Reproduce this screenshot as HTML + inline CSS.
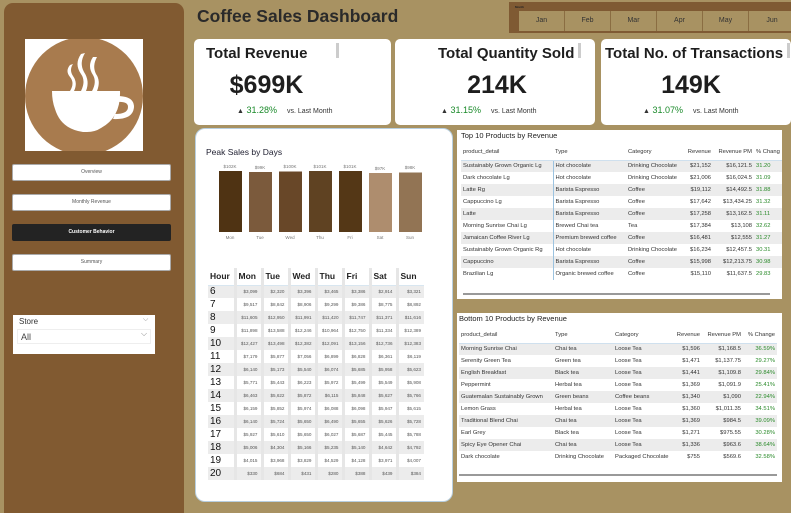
<!DOCTYPE html>
<html><head><meta charset="utf-8"><style>
*{margin:0;padding:0;box-sizing:border-box}
body{width:791px;height:510px;background:#A89262;position:relative;overflow:hidden;font-family:"Liberation Sans",sans-serif;color:#222}
.a{position:absolute}
.side{left:4px;top:3px;width:180px;height:510px;background:#815A31;border-radius:9px 9px 0 0}
.btn{position:absolute;left:12px;width:159px;height:17px;background:#fff;border:1px solid #aaa;border-radius:2px;font-size:5px;color:#555;text-align:center;line-height:15px}
.card{background:#fff;border-radius:5px}
.ct{font-weight:bold;font-size:15px;color:#1e1e1e;white-space:nowrap}
.cv{font-weight:bold;font-size:25px;color:#1e1e1e;text-align:center}
.cd{font-size:9px;color:#1a8a2a;white-space:nowrap}
.cd span{color:#333;font-size:7px;margin-left:10px}
.tri{color:#1a7a1a}
table{border-collapse:collapse;table-layout:fixed}
.tt td{font-size:5.8px;height:12px;white-space:nowrap;overflow:hidden;padding:0 2px;color:#333}
.tt tr:nth-child(even) td{background:#ececec}
.r{text-align:right}
.g{color:#2a8a2a!important}
.hm td{height:13px;font-size:4.6px;color:#555;text-align:right;padding-right:3px;width:27px;border-left:3px solid #e6e6e6}
.hm td:first-child{font-size:10px;color:#111;text-align:left;border-left:none;width:27px;padding-left:2px}
.hm tr:nth-child(even) td{background:#ececec}
.hm th{font-size:8.5px;font-weight:bold;text-align:left;height:17px;padding-left:2px;border-left:3px solid #e6e6e6;border-bottom:1px solid #d8e6f0}
.hm th:first-child{border-left:none}
.m{width:46px;height:20px;background:#A89262;border-right:1px solid #8a6d42;font-size:7px;text-align:center;line-height:20px;color:#333}
</style></head><body>
<div class="a side"></div>
<div class="a" style="left:25px;top:39px;width:118px;height:112px;background:#fff;overflow:hidden">
<svg width="118" height="112" viewBox="0 0 118 112"><circle cx="59" cy="57" r="59" fill="#A87B4E"/>
<path d="M27 52 H95 Q96 78 76 89 Q70 93 62 93 H58 Q36 90 30 70 Q27 62 27 52Z" fill="#fff"/>
<path d="M92 57 Q109 57 109 68 Q108 81 88 80 L90 75 Q103 75 103 68 Q103 62 92 63Z" fill="#fff"/>
<path d="M45 26 Q40 32 45 38 Q50 44 45 52 L49 52 Q53 44 48 37 Q44 31 48 25Z" fill="#fff"/>
<path d="M56 15 Q49 25 56 35 Q61 42 56 52 L61 52 Q65 42 59 33 Q54 24 60 14Z" fill="#fff"/>
<path d="M68 18 Q62 27 68 36 Q72 43 67 52 L72 52 Q76 42 71 35 Q67 27 72 18Z" fill="#fff"/>
</svg></div>
<div class="btn" style="top:164px">Overview</div>
<div class="btn" style="top:194px">Monthly Revenue</div>
<div class="btn" style="top:224px;background:#232323;color:#fff;border-color:#232323;font-weight:bold">Customer Behavior</div>
<div class="btn" style="top:254px">Summary</div>
<div class="a" style="left:13px;top:315px;width:142px;height:39px;background:#fff">
<div class="a" style="left:6px;top:2px;font-size:8px;color:#333">Store</div>
<div class="a" style="left:130px;top:1px;font-size:7px;color:#888">⌵</div>
<div class="a" style="left:4px;top:14px;width:134px;height:15px;border:1px solid #eee;font-size:9px;color:#444;padding-left:3px;line-height:14px">All</div>
<div class="a" style="left:128px;top:14px;font-size:8px;color:#888">⌵</div>
</div>

<div class="a" style="left:197px;top:6px;font-size:17.5px;font-weight:bold;color:#2a2a2a">Coffee Sales Dashboard</div>
<div class="a" style="left:509px;top:2px;width:282px;height:31px;background:#7F5A33"></div>
<div class="a" style="left:515px;top:5px;font-size:3px;color:#222;font-weight:bold">Month</div>
<div class="a" style="left:519px;top:11px;display:flex">
<div class="m">Jan</div><div class="m">Feb</div><div class="m">Mar</div><div class="m">Apr</div><div class="m">May</div><div class="m" style="border:none">Jun</div>
</div>

<div class="a card" style="left:194px;top:39px;width:197px;height:86px">
<div class="a ct" style="left:12px;top:6px">Total Revenue</div>
<div class="a" style="left:142px;top:4px;width:3px;height:15px;background:#ccc"></div>
<div class="a cv" style="left:0;top:32px;width:145px">$699K</div>
<div class="a cd" style="left:33px;top:66px"><span class="tri">▲</span> 31.28%<span>vs. Last Month</span></div>
</div>
<div class="a card" style="left:395px;top:39px;width:200px;height:86px">
<div class="a ct" style="left:43px;top:6px">Total Quantity Sold</div>
<div class="a" style="left:183px;top:4px;width:3px;height:15px;background:#ccc"></div>
<div class="a cv" style="left:42px;top:32px;width:120px">214K</div>
<div class="a cd" style="left:36px;top:66px"><span class="tri">▲</span> 31.15%<span>vs. Last Month</span></div>
</div>
<div class="a card" style="left:601px;top:39px;width:190px;height:86px">
<div class="a ct" style="left:4px;top:6px">Total No. of Transactions</div>
<div class="a" style="left:186px;top:4px;width:3px;height:15px;background:#ccc"></div>
<div class="a cv" style="left:30px;top:32px;width:120px">149K</div>
<div class="a cd" style="left:32px;top:66px"><span class="tri">▲</span> 31.07%<span>vs. Last Month</span></div>
</div>

<div class="a" style="left:195px;top:128px;width:258px;height:374px;background:#fff;border-radius:10px;border:1px solid #b8cfe0">
<div class="a" style="left:10px;top:18px;font-size:8.5px;color:#223">Peak Sales by Days</div>
<svg class="a" style="left:15px;top:32px" width="220" height="80" viewBox="0 0 220 80" font-family="Liberation Sans" font-size="4.5" fill="#777" text-anchor="middle">
<rect x="8" y="10" width="23" height="61" fill="#4F3313"/><text x="19" y="7">$102K</text><text x="19" y="78">Mon</text>
<rect x="38" y="11" width="23" height="60" fill="#7B5A3C"/><text x="49" y="8">$99K</text><text x="49" y="78">Tue</text>
<rect x="68" y="10.5" width="23" height="60.5" fill="#684728"/><text x="79" y="7">$100K</text><text x="79" y="78">Wed</text>
<rect x="98" y="10" width="23" height="61" fill="#5F4222"/><text x="109" y="7">$101K</text><text x="109" y="78">Thu</text>
<rect x="128" y="10" width="23" height="61" fill="#543716"/><text x="139" y="7">$101K</text><text x="139" y="78">Fri</text>
<rect x="158" y="12" width="23" height="59" fill="#AE8D6E"/><text x="169" y="9">$97K</text><text x="169" y="78">Sat</text>
<rect x="188" y="11.5" width="23" height="59.5" fill="#927454"/><text x="199" y="8">$98K</text><text x="199" y="78">Sun</text>
</svg>
<table class="a hm" style="left:12px;top:139px">
<tr><th>Hour</th><th>Mon</th><th>Tue</th><th>Wed</th><th>Thu</th><th>Fri</th><th>Sat</th><th>Sun</th></tr>
<tr><td>6</td><td>$3,099</td><td>$2,320</td><td>$3,396</td><td>$3,465</td><td>$3,386</td><td>$2,914</td><td>$3,321</td></tr>
<tr><td>7</td><td>$9,517</td><td>$8,842</td><td>$8,906</td><td>$9,299</td><td>$9,386</td><td>$8,775</td><td>$8,892</td></tr>
<tr><td>8</td><td>$11,605</td><td>$12,950</td><td>$11,991</td><td>$11,420</td><td>$11,747</td><td>$11,371</td><td>$11,616</td></tr>
<tr><td>9</td><td>$11,898</td><td>$13,588</td><td>$12,246</td><td>$10,964</td><td>$12,750</td><td>$11,334</td><td>$12,389</td></tr>
<tr><td>10</td><td>$12,427</td><td>$13,498</td><td>$12,382</td><td>$12,091</td><td>$13,156</td><td>$12,736</td><td>$12,383</td></tr>
<tr><td>11</td><td>$7,179</td><td>$5,877</td><td>$7,056</td><td>$6,899</td><td>$6,828</td><td>$6,361</td><td>$6,119</td></tr>
<tr><td>12</td><td>$6,140</td><td>$5,173</td><td>$5,540</td><td>$6,074</td><td>$5,685</td><td>$5,958</td><td>$5,623</td></tr>
<tr><td>13</td><td>$5,771</td><td>$5,443</td><td>$6,223</td><td>$5,972</td><td>$5,499</td><td>$5,549</td><td>$5,908</td></tr>
<tr><td>14</td><td>$6,463</td><td>$5,622</td><td>$5,872</td><td>$6,115</td><td>$5,848</td><td>$5,627</td><td>$5,766</td></tr>
<tr><td>15</td><td>$6,159</td><td>$5,852</td><td>$5,974</td><td>$6,088</td><td>$6,098</td><td>$5,947</td><td>$5,615</td></tr>
<tr><td>16</td><td>$6,140</td><td>$5,724</td><td>$5,650</td><td>$6,490</td><td>$5,655</td><td>$5,626</td><td>$5,728</td></tr>
<tr><td>17</td><td>$5,927</td><td>$5,610</td><td>$5,650</td><td>$6,027</td><td>$5,687</td><td>$5,445</td><td>$5,788</td></tr>
<tr><td>18</td><td>$5,006</td><td>$4,304</td><td>$5,166</td><td>$5,235</td><td>$5,140</td><td>$4,642</td><td>$4,792</td></tr>
<tr><td>19</td><td>$4,015</td><td>$3,968</td><td>$3,829</td><td>$4,529</td><td>$4,128</td><td>$3,971</td><td>$4,007</td></tr>
<tr><td>20</td><td>$330</td><td>$684</td><td>$431</td><td>$280</td><td>$388</td><td>$439</td><td>$384</td></tr>
</table>
</div>

<div class="a" style="left:457px;top:130px;width:325px;height:169px;background:#fff;overflow:hidden">
<div class="a" style="left:4px;top:1px;font-size:7.5px;color:#222">Top 10 Products by Revenue</div>
<table class="a tt" style="left:4px;top:14px;width:330px">
<colgroup><col style="width:92px"><col style="width:73px"><col style="width:57px"><col style="width:30px"><col style="width:41px"><col style="width:37px"></colgroup>
<tr style="height:16px"><td style="background:#fff;border-bottom:1px solid #cfe0ee">product_detail</td><td style="border-bottom:1px solid #cfe0ee">Type</td><td style="border-bottom:1px solid #cfe0ee">Category</td><td class="r" style="border-bottom:1px solid #cfe0ee">Revenue</td><td class="r" style="border-bottom:1px solid #cfe0ee">Revenue PM</td><td style="border-bottom:1px solid #cfe0ee">% Chang</td></tr>
<tr><td style="border-right:1px solid #9cc3e0">Sustainably Grown Organic Lg</td><td>Hot chocolate</td><td>Drinking Chocolate</td><td class="r">$21,152</td><td class="r">$16,121.5</td><td class="g">31.20</td></tr>
<tr><td style="border-right:1px solid #9cc3e0">Dark chocolate Lg</td><td>Hot chocolate</td><td>Drinking Chocolate</td><td class="r">$21,006</td><td class="r">$16,024.5</td><td class="g">31.09</td></tr>
<tr><td style="border-right:1px solid #9cc3e0">Latte Rg</td><td>Barista Espresso</td><td>Coffee</td><td class="r">$19,112</td><td class="r">$14,492.5</td><td class="g">31.88</td></tr>
<tr><td style="border-right:1px solid #9cc3e0">Cappuccino Lg</td><td>Barista Espresso</td><td>Coffee</td><td class="r">$17,642</td><td class="r">$13,434.25</td><td class="g">31.32</td></tr>
<tr><td style="border-right:1px solid #9cc3e0">Latte</td><td>Barista Espresso</td><td>Coffee</td><td class="r">$17,258</td><td class="r">$13,162.5</td><td class="g">31.11</td></tr>
<tr><td style="border-right:1px solid #9cc3e0">Morning Sunrise Chai Lg</td><td>Brewed Chai tea</td><td>Tea</td><td class="r">$17,384</td><td class="r">$13,108</td><td class="g">32.62</td></tr>
<tr><td style="border-right:1px solid #9cc3e0">Jamaican Coffee River Lg</td><td>Premium brewed coffee</td><td>Coffee</td><td class="r">$16,481</td><td class="r">$12,555</td><td class="g">31.27</td></tr>
<tr><td style="border-right:1px solid #9cc3e0">Sustainably Grown Organic Rg</td><td>Hot chocolate</td><td>Drinking Chocolate</td><td class="r">$16,234</td><td class="r">$12,457.5</td><td class="g">30.31</td></tr>
<tr><td style="border-right:1px solid #9cc3e0">Cappuccino</td><td>Barista Espresso</td><td>Coffee</td><td class="r">$15,998</td><td class="r">$12,213.75</td><td class="g">30.98</td></tr>
<tr><td style="border-right:1px solid #9cc3e0">Brazilian Lg</td><td>Organic brewed coffee</td><td>Coffee</td><td class="r">$15,110</td><td class="r">$11,637.5</td><td class="g">29.83</td></tr>
</table>
<div class="a" style="left:6px;top:163px;width:307px;height:2px;background:#999"></div>
</div>

<div class="a" style="left:457px;top:313px;width:325px;height:169px;background:#fff;overflow:hidden">
<div class="a" style="left:2px;top:1px;font-size:7.5px;color:#222">Bottom 10 Products by Revenue</div>
<table class="a tt" style="left:2px;top:14px;width:318px">
<colgroup><col style="width:94px"><col style="width:60px"><col style="width:58px"><col style="width:31px"><col style="width:41px"><col style="width:34px"></colgroup>
<tr style="height:16px"><td style="background:#fff;border-bottom:1px solid #cfe0ee">product_detail</td><td style="border-bottom:1px solid #cfe0ee">Type</td><td style="border-bottom:1px solid #cfe0ee">Category</td><td class="r" style="border-bottom:1px solid #cfe0ee">Revenue</td><td class="r" style="border-bottom:1px solid #cfe0ee">Revenue PM</td><td class="r" style="border-bottom:1px solid #cfe0ee">% Change</td></tr>
<tr><td>Morning Sunrise Chai</td><td>Chai tea</td><td>Loose Tea</td><td class="r">$1,596</td><td class="r">$1,168.5</td><td class="r g">36.59%</td></tr>
<tr><td>Serenity Green Tea</td><td>Green tea</td><td>Loose Tea</td><td class="r">$1,471</td><td class="r">$1,137.75</td><td class="r g">29.27%</td></tr>
<tr><td>English Breakfast</td><td>Black tea</td><td>Loose Tea</td><td class="r">$1,441</td><td class="r">$1,109.8</td><td class="r g">29.84%</td></tr>
<tr><td>Peppermint</td><td>Herbal tea</td><td>Loose Tea</td><td class="r">$1,369</td><td class="r">$1,091.9</td><td class="r g">25.41%</td></tr>
<tr><td>Guatemalan Sustainably Grown</td><td>Green beans</td><td>Coffee beans</td><td class="r">$1,340</td><td class="r">$1,090</td><td class="r g">22.94%</td></tr>
<tr><td>Lemon Grass</td><td>Herbal tea</td><td>Loose Tea</td><td class="r">$1,360</td><td class="r">$1,011.35</td><td class="r g">34.51%</td></tr>
<tr><td>Traditional Blend Chai</td><td>Chai tea</td><td>Loose Tea</td><td class="r">$1,369</td><td class="r">$984.5</td><td class="r g">39.09%</td></tr>
<tr><td>Earl Grey</td><td>Black tea</td><td>Loose Tea</td><td class="r">$1,271</td><td class="r">$975.55</td><td class="r g">30.28%</td></tr>
<tr><td>Spicy Eye Opener Chai</td><td>Chai tea</td><td>Loose Tea</td><td class="r">$1,336</td><td class="r">$963.6</td><td class="r g">38.64%</td></tr>
<tr><td>Dark chocolate</td><td>Drinking Chocolate</td><td>Packaged Chocolate</td><td class="r">$755</td><td class="r">$569.6</td><td class="r g">32.58%</td></tr>
</table>
<div class="a" style="left:2px;top:161px;width:318px;height:2px;background:#999"></div>
</div>
</body></html>
